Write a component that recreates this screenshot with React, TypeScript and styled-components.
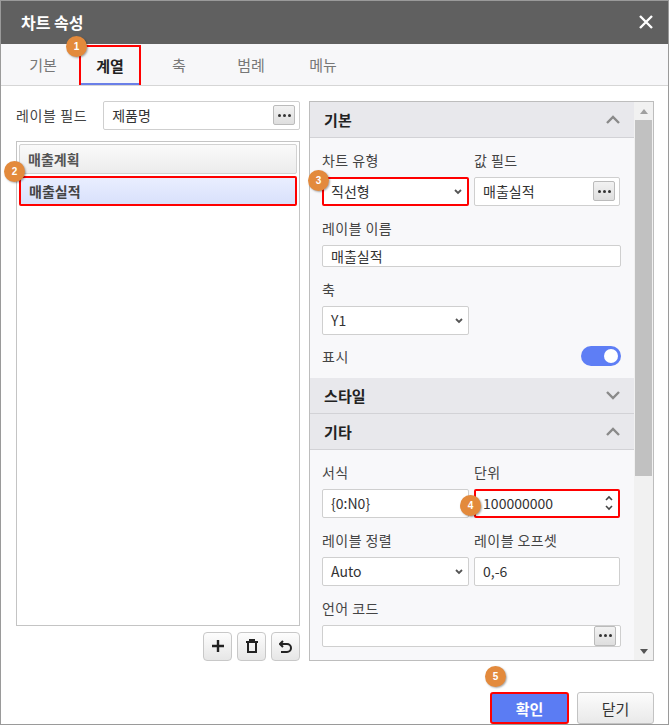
import React from "react";
import styled, { createGlobalStyle } from "styled-components";

const G = createGlobalStyle`
  html,body{margin:0;padding:0;background:#fff;}
  body{font-family:"Noto Sans CJK KR","Noto Sans",sans-serif;font-size:14px;color:#333;}
  *{box-sizing:border-box;}
`;
const Win = styled.div`width:669px;height:725px;border:1px solid #9a9a9a;display:flex;flex-direction:column;position:relative;background:#fff;`;
const Title = styled.div`height:43px;background:#606060;color:#fff;display:flex;align-items:center;justify-content:space-between;padding:0 14px 0 20px;font-size:16px;font-weight:700;`;
const Tabs = styled.div`height:42px;background:#f7f7f9;border-bottom:1px solid #d6d6d6;display:flex;align-items:stretch;padding-left:6px;`;
const Tab = styled.div<{ $on?: boolean; $w: number }>`width:${p => p.$w}px;display:flex;align-items:center;justify-content:center;font-size:15px;position:relative;
  color:${p => (p.$on ? "#222" : "#777")};font-weight:${p => (p.$on ? 700 : 400)};
  ${p => p.$on && "border:2px solid #f00;border-bottom:none;box-shadow:inset 0 -2px 0 #6a7fe8;margin:1px 0 0;"}`;
const Body = styled.div`display:flex;padding:15px 14px 0 15px;gap:9px;height:590px;`;
const Left = styled.div`width:285px;display:flex;flex-direction:column;`;
const Row = styled.div`display:flex;align-items:center;gap:16px;`;
const Lbl = styled.div`font-size:14px;color:#444;letter-spacing:0.6px;`;
const Input = styled.div<{ $w?: number; $red?: boolean }>`height:29px;${p => (p.$w ? `width:${p.$w}px;` : "flex:1;")}
  border:${p => (p.$red ? "2px solid #f00" : "1px solid #cfcfcf")};background:#fff;border-radius:2px;display:flex;align-items:center;
  padding:0 4px 0 ${p => (p.$red ? 7 : 8)}px;font-size:14px;color:#333;justify-content:space-between;position:relative;`;
const Dots = styled.div`width:22px;height:20px;border:1px solid #bbb;border-radius:2px;background:linear-gradient(#f2f2f2,#dedede);display:flex;align-items:center;justify-content:center;gap:2px;`;
const Dot = styled.span`width:3px;height:3px;background:#333;border-radius:50%;`;
const List = styled.div`margin-top:11px;height:485px;border:1px solid #c4c4c4;padding:2px;display:flex;flex-direction:column;gap:2px;position:relative;`;
const Item = styled.div<{ $sel?: boolean }>`height:30px;display:flex;align-items:center;padding-left:8px;font-size:14px;color:#555;font-weight:700;border-radius:2px;
  ${p => (p.$sel ? "background:linear-gradient(#e9eeff,#d9e1fb);border:2px solid #f00;color:#444;" : "background:linear-gradient(#fafafa,#ececec);border:1px solid #d2d2d2;")}`;
const Btns = styled.div`display:flex;justify-content:flex-end;gap:5px;margin-top:6px;`;
const SBtn = styled.div`width:29px;height:29px;border:1px solid #c8c8c8;border-radius:4px;background:linear-gradient(#fdfdfd,#e6e6e6);display:flex;align-items:center;justify-content:center;`;
const Panel = styled.div`width:346px;height:560px;border:1px solid #bdbdbd;display:flex;background:#f8f8fa;overflow:hidden;`;
const Scroll = styled.div`flex:1;display:flex;flex-direction:column;overflow:hidden;`;
const Head = styled.div`height:36px;flex:none;background:#e8e8ec;border-bottom:1px solid #d2d2d6;display:flex;align-items:center;justify-content:space-between;padding:0 14px;font-size:15px;font-weight:700;color:#222;`;
const Sec = styled.div`padding:10px 13px 12px 12px;display:flex;flex-direction:column;`;
const Grid2 = styled.div`display:grid;grid-template-columns:147px 146px;column-gap:5px;`;
const FL = styled.div`font-size:14px;color:#444;height:19px;margin-bottom:8px;margin-top:2px;letter-spacing:0.4px;`;
const Gap = styled.div`height:10px;`;
const Toggle = styled.div`width:40px;height:20px;border-radius:10px;background:#5e7ef5;position:relative;
  &::after{content:"";position:absolute;right:3px;top:3px;width:14px;height:14px;border-radius:50%;background:#fff;}`;
const Bar = styled.div`width:19px;flex:none;background:#f1f1f1;display:flex;flex-direction:column;align-items:center;`;
const Thumb = styled.div`width:17px;height:356px;background:#c1c1c1;margin-top:6px;`;
const Arrow = styled.div<{ $d?: boolean }>`width:0;height:0;border-left:4px solid transparent;border-right:4px solid transparent;margin-top:${p => (p.$d ? "auto" : "7px")};margin-bottom:${p => (p.$d ? "6px" : "0")};
  ${p => (p.$d ? "border-top:5px solid #555;" : "border-bottom:5px solid #a0a0a0;")}`;
const Foot = styled.div`display:flex;justify-content:flex-end;gap:8px;padding:17px 14px 0 0;`;
const Btn = styled.div<{ $pri?: boolean }>`width:${p => (p.$pri ? 79 : 77)}px;height:32px;border-radius:3px;display:flex;align-items:center;justify-content:center;font-size:15px;position:relative;
  ${p => (p.$pri ? "background:#5b7cf3;color:#fff;font-weight:700;border:2px solid #f00;" : "background:linear-gradient(#fcfcfc,#e9e9e9);border:1px solid #c3c3c3;color:#333;")}`;
const Badge = styled.div<{ $x: number; $y: number }>`position:absolute;left:${p => p.$x}px;top:${p => p.$y}px;width:21px;height:21px;border-radius:50%;
  background:#e38a3c;color:#fff;font-size:10px;font-weight:700;display:flex;align-items:center;justify-content:center;box-shadow:1px 1px 2px rgba(0,0,0,.35);font-family:"Liberation Sans",sans-serif;z-index:2;`;

const Chev = ({ up }: { up?: boolean }) => (
  <svg width="14" height="9" viewBox="0 0 14 9"><path d={up ? "M1 8 L7 2 L13 8" : "M1 1 L7 7 L13 1"} stroke="#8a8a8a" strokeWidth="2.4" fill="none" /></svg>
);
const Small = () => (
  <svg width="10" height="7" viewBox="0 0 10 7"><path d="M2 2 L5 5 L8 2" stroke="#555" strokeWidth="1.8" fill="none" /></svg>
);
const D = () => <Dots><Dot /><Dot /><Dot /></Dots>;

export default function App() {
  return (
    <Win>
      <G />
      <Title>
        <span>차트 속성</span>
        <svg width="16" height="16" viewBox="0 0 16 16"><path d="M2 2 L14 14 M14 2 L2 14" stroke="#fff" strokeWidth="2.4" /></svg>
      </Title>
      <Tabs>
        <Tab $w={72}>기본</Tab>
        <Tab $w={62} $on>계열</Tab>
        <Tab $w={76}>축</Tab>
        <Tab $w={68}>범례</Tab>
        <Tab $w={76}>메뉴</Tab>
      </Tabs>
      <Badge $x={65} $y={35}>1</Badge>
      <Body>
        <Left>
          <Row>
            <Lbl>레이블 필드</Lbl>
            <Input>제품명<D /></Input>
          </Row>
          <List>
            <Item>매출계획</Item>
            <Item $sel>매출실적</Item>
          </List>
          <Btns>
            <SBtn><svg width="14" height="14" viewBox="0 0 14 14"><path d="M7 1V13M1 7H13" stroke="#222" strokeWidth="2.4" /></svg></SBtn>
            <SBtn><svg width="12" height="14" viewBox="0 0 12 14"><path d="M0 3H12M4 3V1H8V3M2 4V13H10V4" stroke="#222" strokeWidth="2" fill="none" /></svg></SBtn>
            <SBtn><svg width="13" height="13" viewBox="0 0 13 13"><path d="M4 1L1 4L4 7M1 4H8A4 4 0 0 1 8 12H2" stroke="#222" strokeWidth="2" fill="none" /></svg></SBtn>
          </Btns>
        </Left>
        <Panel>
          <Scroll>
            <Head>기본<Chev up /></Head>
            <Sec>
              <Grid2>
                <FL>차트 유형</FL><FL>값 필드</FL>
                <Input $red>직선형<Small /></Input>
                <Input>매출실적<D /></Input>
              </Grid2>
              <Gap />
              <FL>레이블 이름</FL>
              <Input>매출실적</Input>
              <Gap />
              <FL>축</FL>
              <Grid2><Input>Y1<Small /></Input></Grid2>
              <Row style={{ justifyContent: "space-between", marginTop: 11 }}><Lbl>표시</Lbl><Toggle /></Row>
            </Sec>
            <Head>스타일<Chev /></Head>
            <Head>기타<Chev up /></Head>
            <Sec>
              <Grid2>
                <FL>서식</FL><FL>단위</FL>
                <Input>{"{0:N0}"}</Input>
                <Input $red>100000000
                  <svg width="10" height="20" viewBox="0 0 10 20"><path d="M2 7L5 4L8 7M2 13L5 16L8 13" stroke="#444" strokeWidth="1.6" fill="none" /></svg>
                </Input>
              </Grid2>
              <Gap />
              <Grid2>
                <FL>레이블 정렬</FL><FL>레이블 오프셋</FL>
                <Input>Auto<Small /></Input>
                <Input>0,-6</Input>
              </Grid2>
              <Gap />
              <FL>언어 코드</FL>
              <Input><span /><D /></Input>
            </Sec>
          </Scroll>
          <Bar><Arrow /><Thumb /><Arrow $d /></Bar>
        </Panel>
      </Body>
      <Badge $x={3} $y={160}>2</Badge>
      <Badge $x={307} $y={169}>3</Badge>
      <Badge $x={459} $y={494}>4</Badge>
      <Badge $x={484} $y={665}>5</Badge>
      <Foot>
        <Btn $pri>확인</Btn>
        <Btn>닫기</Btn>
      </Foot>
    </Win>
  );
}
